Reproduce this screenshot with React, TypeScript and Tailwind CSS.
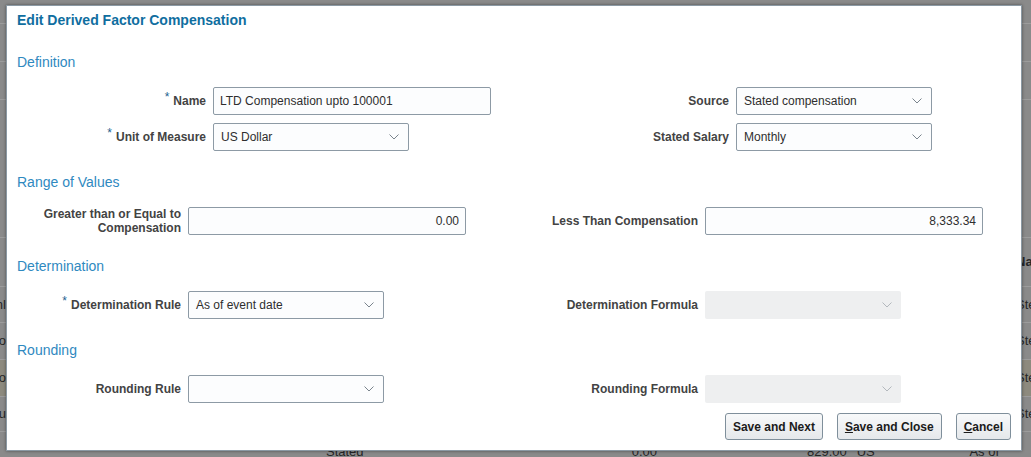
import React from "react"

const FONT = { fontFamily: '"Liberation Sans", Arial, sans-serif' }

const Chevron = ({ disabled = false }: { disabled?: boolean }) => (
  <svg width="10" height="6" viewBox="0 0 10 6" fill="none">
    <path d="M0.5 0.5 L5 5 L9.5 0.5" stroke={disabled ? "#b3b8bd" : "#7a848d"} strokeWidth="1" />
  </svg>
)

const Label = ({ text, required, width }: { text: React.ReactNode; required?: boolean; width: string }) => (
  <div className={`${width} shrink-0 pr-[7px] text-right text-[12px] font-bold leading-[14px] text-[#434343]`}>
    {required && <span className="relative top-[-4px] mr-[4px] font-normal text-[#1e5f8f]">*</span>}
    {text}
  </div>
)

const TextInput = ({ value, width, right }: { value: string; width: string; right?: boolean }) => (
  <div
    className={`${width} flex h-[28px] shrink-0 items-center rounded-[2px] border border-[#8d9aa5] bg-[#fcfdfe] px-[6px] text-[12px] text-[#2e2e2e] ${
      right ? "justify-end" : ""
    }`}
  >
    {value}
  </div>
)

const Select = ({ value, width, disabled }: { value?: string; width: string; disabled?: boolean }) => (
  <div
    className={`${width} flex h-[28px] shrink-0 items-center justify-between rounded-[2px] pl-[7px] pr-[9px] text-[12px] text-[#2e2e2e] ${
      disabled ? "bg-[#eeeff0]" : "border border-[#8d9aa5] bg-[#fcfdfe]"
    }`}
  >
    <span>{value}</span>
    <Chevron disabled={disabled} />
  </div>
)

const Section = ({ title }: { title: string }) => (
  <div className="h-[20px] text-[14px] leading-[20px] text-[#2f89bf]">{title}</div>
)

const Button = ({ children }: { children: React.ReactNode }) => (
  <button className="h-[27px] rounded-[3px] border border-[#7f8f9b] bg-gradient-to-b from-[#f8f9fa] to-[#e5e8eb] px-[7px] text-[12px] font-bold text-[#1b1b1b]">
    {children}
  </button>
)

// rows of the page sitting behind the modal
const bgRows = [
  { h: "h-[24px]", l: "", r: "" },
  { h: "h-[38px]", l: "", r: "" },
  { h: "h-[38px]", l: "", r: "" },
  { h: "h-[138px]", l: "", r: "" },
  { h: "h-[49px]", l: "", r: "Na", bold: true },
  { h: "h-[36px]", l: "Monthl", r: "Ste" },
  { h: "h-[37px]", l: "Yearo", r: "Ste" },
  { h: "h-[37px]", l: "Info", r: "Ste", band: true },
  { h: "h-[35px]", l: "Annu", r: "Ste" },
]

export default function App() {
  return (
    <div className="relative h-[457px] w-[1031px] overflow-hidden bg-[#8a8a8a]" style={FONT}>
      {/* dimmed page content */}
      <div className="flex flex-col">
        {bgRows.map((row, i) => (
          <div
            key={i}
            className={`${row.h} flex items-center justify-between border-b border-[#9c9c9c] ${row.band ? "bg-[#8d8a7e]" : ""}`}
          >
            <div className="flex w-[6px] justify-end overflow-hidden whitespace-nowrap text-[13px] text-[#262626]">{row.l}</div>
            <div
              className={`w-[15px] overflow-hidden whitespace-nowrap text-[13px] text-[#262626] ${row.bold ? "font-bold" : ""}`}
            >
              {row.r}
            </div>
          </div>
        ))}
        <div className="flex h-[40px] items-start pt-[10px] text-[13px] text-[#262626]">
          <span className="ml-[326px]">Stated compensation</span>
          <span className="ml-[190px]">0.00</span>
          <span className="ml-[150px]">829.00</span>
          <span className="ml-[10px]">US Dollar</span>
          <span className="ml-[60px]">As of event</span>
        </div>
      </div>

      {/* modal */}
      <div className="absolute left-[6px] top-[5px] flex w-[1016px] flex-col border border-[#8b99a4] bg-white pb-[10px] pl-[10px] pr-[10px] pt-[4px] shadow-[0_0_3px_rgba(0,0,0,0.45)]">
        <div className="h-[20px] text-[14px] font-bold leading-[20px] text-[#106e9f]">Edit Derived Factor Compensation</div>

        <div className="mt-[22px]">
          <Section title="Definition" />
        </div>
        <div className="mt-[15px] flex flex-col gap-[8px]">
          <div className="flex items-center">
            <Label text="Name" required width="w-[196px]" />
            <TextInput value="LTD Compensation upto 100001" width="w-[278px]" />
            <Label text="Source" width="w-[245px]" />
            <Select value="Stated compensation" width="w-[196px]" />
          </div>
          <div className="flex items-center">
            <Label text="Unit of Measure" required width="w-[196px]" />
            <Select value="US Dollar" width="w-[196px]" />
            <Label text="Stated Salary" width="w-[327px]" />
            <Select value="Monthly" width="w-[196px]" />
          </div>
        </div>

        <div className="mt-[21px]">
          <Section title="Range of Values" />
        </div>
        <div className="mt-[15px] flex items-center">
          <Label
            text={
              <>
                Greater than or Equal to
                <br />
                Compensation
              </>
            }
            width="w-[171px]"
          />
          <TextInput value="0.00" width="w-[278px]" right />
          <Label text="Less Than Compensation" width="w-[239px]" />
          <TextInput value="8,333.34" width="w-[278px]" right />
        </div>

        <div className="mt-[21px]">
          <Section title="Determination" />
        </div>
        <div className="mt-[15px] flex items-center">
          <Label text="Determination Rule" required width="w-[171px]" />
          <Select value="As of event date" width="w-[196px]" />
          <Label text="Determination Formula" width="w-[321px]" />
          <Select width="w-[196px]" disabled />
        </div>

        <div className="mt-[21px]">
          <Section title="Rounding" />
        </div>
        <div className="mt-[15px] flex items-center">
          <Label text="Rounding Rule" width="w-[171px]" />
          <Select width="w-[196px]" />
          <Label text="Rounding Formula" width="w-[321px]" />
          <Select width="w-[196px]" disabled />
        </div>

        <div className="mt-[10px] flex justify-end gap-[14px]">
          <Button>Save and Next</Button>
          <Button>
            <span className="underline">S</span>ave and Close
          </Button>
          <Button>
            <span className="underline">C</span>ancel
          </Button>
        </div>
      </div>
    </div>
  )
}
